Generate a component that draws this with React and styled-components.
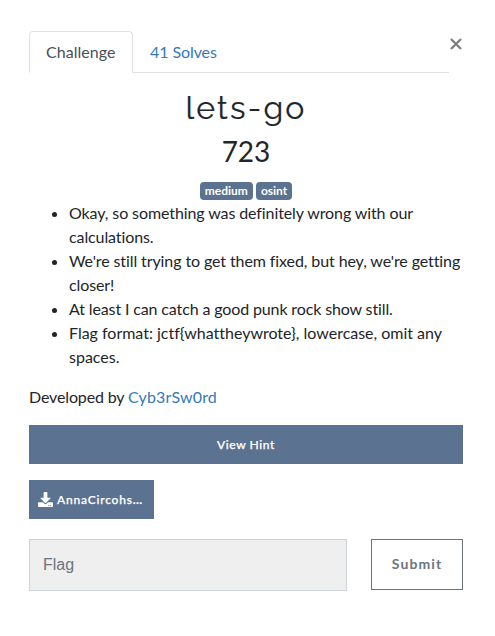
import React from "react";
import styled, { createGlobalStyle } from "styled-components";

const Global = createGlobalStyle`
  * { box-sizing: border-box; }
  body { margin: 0; background: #fff; color: #212529; font: 400 16px/24px Lato, "Liberation Sans", sans-serif; }
`;
const Page = styled.main`width: 495px; height: 636px; padding: 31px 32px 0 29px; overflow: hidden;`;
const TopBar = styled.header`display: flex; justify-content: space-between; align-items: flex-start;`;
const Tabs = styled.nav`display: flex; width: 420px; height: 42px; border-bottom: 1px solid #dee2e6;`;
const Tab = styled.a`
  height: 42px; padding: 8px 16px; border: 1px solid transparent; border-radius: 4px 4px 0 0;
  letter-spacing: ${(p) => (p.$active ? 0.05 : -0.08)}px; white-space: nowrap;
  color: ${(p) => (p.$active ? "#495057" : "#337ab7")};
  ${(p) => p.$active && "width: 104px; background: #fff; border-color: #dee2e6 #dee2e6 #fff;"}
`;
const Close = styled.button`
  display: flex; justify-content: center; align-items: center; border: 0; background: none; padding: 0;
  width: 14px; height: 25px; color: #7f7f7f;
`;
const Title = styled.h2`
  margin: 16px 0 0; text-align: center; font: 400 32px/38px Raleway, Lato, sans-serif;
  letter-spacing: 2.2px; -webkit-text-stroke: 0.2px currentColor;
`;
const Points = styled.h3`margin: 7px 0 0; text-align: center; font: 400 28px/34px Lato, sans-serif;`;
const Tags = styled.div`display: flex; justify-content: center; gap: 3px; margin-top: 14px;`;
const Tag = styled.span`
  background: #5b7290; color: #fff; border-radius: 4px; height: 18px; padding: 0 5px;
  font: 700 12px/18px Lato, sans-serif;
`;
const List = styled.ul`margin: 1px 0 16px; padding-left: 40px;`;
const Item = styled.li`letter-spacing: ${(p) => p.$spacing}px; margin-right: -4px;`;
const Credit = styled.p`margin: 0 0 16px; letter-spacing: -0.14px;`;
const Author = styled.a`color: #337ab7; letter-spacing: 0.15px;`;
const Button = styled.button`
  display: flex; align-items: center; justify-content: ${(p) => (p.$file ? "flex-start" : "center")}; gap: 4px;
  height: 39px; padding: 0 9px; border: 0; background: #5b7290; color: #fff;
  font: 500 12px/18px Lato, sans-serif; letter-spacing: ${(p) => (p.$file ? 0.8 : 0.6)}px;
  -webkit-text-stroke: 0.25px currentColor;
  width: ${(p) => (p.$file ? "125px" : "100%")}; margin-bottom: ${(p) => (p.$file ? 20 : 16)}px;
`;
const FileName = styled.span`white-space: nowrap; text-align: left;`;
const Dots = styled.b`letter-spacing: 0.4px; font-weight: 700;`;
const Form = styled.form`display: flex; justify-content: space-between;`;
const Flag = styled.input`
  width: 318px; height: 52px; border: 1px solid #ced4da; background: #efefef; padding: 0 13px;
  font: 400 16px "Liberation Sans", sans-serif; border-radius: 0; &::placeholder { color: #6c757d; opacity: 1; }
`;
const Submit = styled.button`
  width: 92px; height: 51px; border: 1px solid #6c757d; background: #fff; color: #6c757d; padding: 0 0 2px;
  font: 700 14px Lato, sans-serif; letter-spacing: 1.1px;
`;

const notes = [
  { text: "Okay, so something was definitely wrong with our calculations.", spacing: -0.1 },
  { text: "We're still trying to get them fixed, but hey, we're getting closer!", spacing: -0.1 },
  { text: "At least I can catch a good punk rock show still.", spacing: -0.13 },
  { text: "Flag format: jctf{whattheywrote}, lowercase, omit any spaces.", spacing: -0.01 },
];

export default function App() {
  return (
    <Page>
      <Global />
      <TopBar>
        <Tabs><Tab $active>Challenge</Tab><Tab>41 Solves</Tab></Tabs>
        <Close aria-label="Close">
          <svg width="12" height="12" viewBox="0 0 12 12" fill="none" stroke="currentColor" strokeWidth="2.3"><path d="M1 1l10 10M11 1L1 11"/></svg>
        </Close>
      </TopBar>
      <Title>lets-go</Title>
      <Points>723</Points>
      <Tags><Tag>medium</Tag><Tag>osint</Tag></Tags>
      <List>
        {notes.map((n) => <Item key={n.text} $spacing={n.spacing}>{n.text}</Item>)}
      </List>
      <Credit>Developed by <Author>Cyb3rSw0rd</Author></Credit>
      <Button>View Hint</Button>
      <Button $file>
        <svg width="15" height="15" viewBox="0 0 512 512" fill="currentColor"><path d="M216 0h80c13.300 0 24 10.700 24 24v168h87.700c17.800 0 26.700 21.500 14.100 34.100L269.700 378.300c-7.500 7.500-19.800 7.500-27.300 0L90.100 226.100c-12.600-12.600-3.700-34.100 14.100-34.100H192V24c0-13.300 10.700-24 24-24zm296 376v112c0 13.300-10.700 24-24 24H24c-13.300 0-24-10.700-24-24V376c0-13.300 10.700-24 24-24h146.700l49 49c20.100 20.100 52.500 20.100 72.600 0l49-49H488c13.300 0 24 10.700 24 24zm-124 88c0-11-9-20-20-20s-20 9-20 20 9 20 20 20 20-9 20-20zm64 0c0-11-9-20-20-20s-20 9-20 20 9 20 20 20 20-9 20-20z"/></svg>
        <FileName>AnnaCircohs<Dots>...</Dots></FileName>
      </Button>
      <Form><Flag placeholder="Flag" /><Submit type="button">Submit</Submit></Form>
    </Page>
  );
}
